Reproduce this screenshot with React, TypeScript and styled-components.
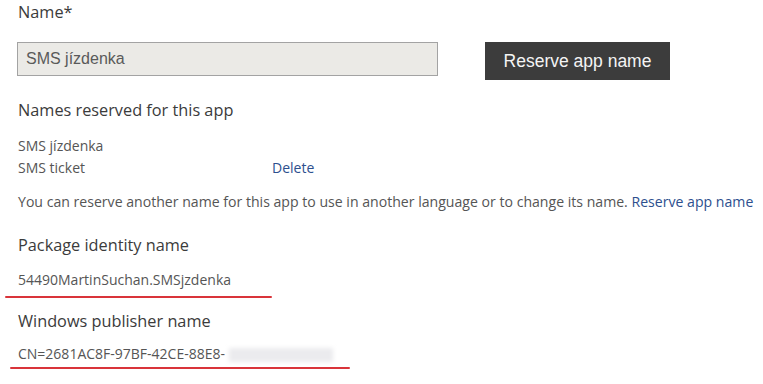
import React from "react";
import styled, {createGlobalStyle} from "styled-components";

// ** Global **
const GlobalStyle = createGlobalStyle`
    body {
        margin: 0;
        background: #fff;
        font-family: "Open Sans", "Noto Sans", sans-serif;
    }
`

// ** Styled-Component **
const Page = styled.div`
    padding: 0 0 0 18px;
    width: 763px;
    height: 384px;
    box-sizing: border-box;
    overflow: hidden;
`
const Heading = styled.div<{ top: number }>`
    margin-top: ${(props) => props.top}px;
    font-size: 16.3px;
    line-height: 22px;
    color: #3b3b3b;
`
const NameRow = styled.div`
    display: flex;
    align-items: flex-start;
    margin-top: 19px;
    margin-left: -1px;
`
const NameInput = styled.input`
    width: 421px;
    height: 34px;
    box-sizing: border-box;
    padding: 0 0 0 8px;
    border: 1px solid #a3a3a3;
    background: #ebeae6;
    font-family: "Liberation Sans", Arial, sans-serif;
    font-size: 16px;
    color: #5a5a5a;
    outline: none;
`
const ReserveBtn = styled.button`
    margin-left: 47px;
    width: 185px;
    height: 38px;
    padding: 0;
    border: none;
    background: #3c3c3c;
    color: #f4f4f4;
    font-family: "Liberation Sans", Arial, sans-serif;
    font-size: 17.5px;
    cursor: pointer;
`
const NameList = styled.div`
    margin-top: 14px;
`
const NameItem = styled.div`
    display: flex;
    font-size: 14px;
    line-height: 22px;
    color: #555;
`
const NameText = styled.span`
    width: 254px;
`
const Link = styled.a`
    color: #2d4f8e;
    text-decoration: none;
    cursor: pointer;
`
const Note = styled.p`
    margin: 12px 0 0;
    font-size: 14.1px;
    line-height: 22px;
    color: #555;
    white-space: nowrap;
`
const Value = styled.div<{ top: number }>`
    margin-top: ${(props) => props.top}px;
    font-size: 14px;
    line-height: 22px;
    color: #555;
`
const Hidden = styled.span`
    display: inline-block;
    width: 104px;
    height: 14px;
    vertical-align: middle;
    margin-left: 4px;
    background: #ebebee;
    filter: blur(2px);
`
const RedLine = styled.div<{ top: number; left: number; width: number }>`
    margin-top: ${(props) => props.top}px;
    margin-left: ${(props) => props.left - 18}px;
    width: ${(props) => props.width}px;
    height: 2px;
    border-radius: 1px;
    background: #d9343a;
`

function App() {
    return (
        <>
            <GlobalStyle/>
            <Page>
                <Heading top={1}>Name*</Heading>
                <NameRow>
                    <NameInput defaultValue="SMS jízdenka"/>
                    <ReserveBtn>Reserve app name</ReserveBtn>
                </NameRow>
                <Heading top={19}>Names reserved for this app</Heading>
                <NameList>
                    <NameItem><NameText>SMS jízdenka</NameText></NameItem>
                    <NameItem>
                        <NameText>SMS ticket</NameText>
                        <Link>Delete</Link>
                    </NameItem>
                </NameList>
                <Note>
                    You can reserve another name for this app to use in another language or to change its name.{" "}
                    <Link>Reserve app name</Link>
                </Note>
                <Heading top={21}>Package identity name</Heading>
                <Value top={13}>54490MartinSuchan.SMSjzdenka</Value>
                <RedLine top={5} left={5} width={267}/>
                <Heading top={12}>Windows publisher name</Heading>
                <Value top={11}>
                    CN=2681AC8F-97BF-42CE-88E8-<Hidden/>
                </Value>
                <RedLine top={2} left={10} width={340}/>
            </Page>
        </>
    );
}

export default App;
